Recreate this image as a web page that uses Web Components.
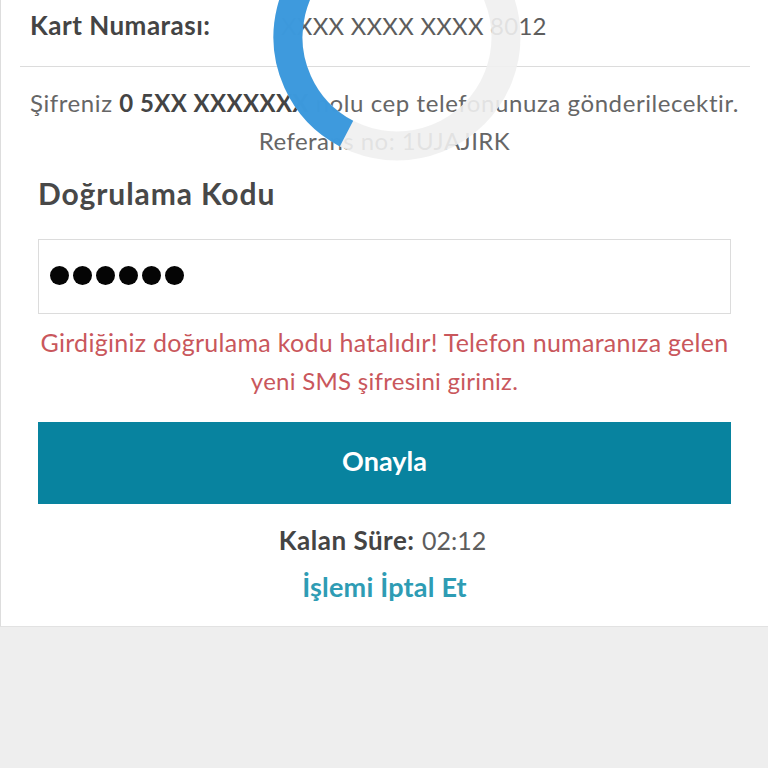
<!DOCTYPE html>
<html lang="tr">
<head>
<meta charset="utf-8">
<title>Doğrulama</title>
<style>
	html, body { margin: 0; height: 100%; background: #eeeeee; overflow: hidden; }
	body { font-family: Lato, "Open Sans", sans-serif; color: #555; }
</style>
</head>
<body>
<template id="secure-panel-tpl">
	<style>
		:host { display: block; position: relative; height: 627px; box-sizing: border-box; background: #fff; border-left: 1px solid #ddd; border-bottom: 1px solid #e2e2e2; }
		.top { margin: 0 18px 0 19px; height: 67px; box-sizing: border-box; border-bottom: 1px solid #dcdcdc; padding: 5px 0 21px 10px; display: grid; grid-template-columns: 251px 1fr; align-items: center; font-size: 24px; }
		.top b { font-size: 26px; letter-spacing: .5px; font-weight: 700; color: #444; white-space: nowrap; }
		.top span { color: #5d5d5d; letter-spacing: .25px; }
		.info { text-align: center; font-size: 24px; letter-spacing: .58px; line-height: 38px; padding-top: 17px; color: #666; white-space: nowrap; }
		.info b { color: #444; font-weight: 700; letter-spacing: .4px; }
		.info span { letter-spacing: .45px; }
		.form { padding: 0 37px 0 37px; }
		h2 { margin: 16px 0 29px; font-size: 30px; letter-spacing: .9px; line-height: 34px; font-weight: 700; color: #484848; }
		.error { text-align: center; color: #c9575c; font-size: 25px; letter-spacing: .28px; line-height: 38px; margin: 9px 0 22px; white-space: nowrap; }
		.error span { font-size: 24px; }
		.timer { text-align: center; margin-top: 18px; padding-right: 4px; font-size: 25px; line-height: 36px; color: #5d5d5d; }
		.timer b { font-size: 26px; letter-spacing: .5px; margin-right: 1px; color: #444; }
		.cancel { display: block; text-align: center; margin-top: 11px; font-size: 27px; letter-spacing: .2px; line-height: 36px; font-weight: 700; color: #2e9cb4; text-decoration: none; }
	</style>
	<div class="top"><b>Kart Numarası:</b><span>XXXX XXXX XXXX 8012</span></div>
	<div class="info">Şifreniz <b>0 5XX XXXXXXX</b> nolu cep telefonunuza gönderilecektir.<br><span>Referans no: 1UJAJIRK</span></div>
	<div class="form">
		<h2>Doğrulama Kodu</h2>
		<code-input></code-input>
		<div class="error">Girdiğiniz doğrulama kodu hatalıdır! Telefon numaranıza gelen<br><span>yeni SMS şifresini giriniz.</span></div>
		<teal-button>Onayla</teal-button>
		<div class="timer"><b>Kalan Süre:</b> 02:12</div>
		<a class="cancel" href="#">İşlemi İptal Et</a>
	</div>
	<ring-spinner></ring-spinner>
</template>
<template id="code-input-tpl">
	<style>
		:host { display: flex; align-items: center; gap: 4px; height: 75px; box-sizing: border-box; border: 1.5px solid #dcdcdc; padding: 0 0 2px 10.5px; background: #fff; }
		i { width: 19px; height: 19px; border-radius: 50%; background: #050505; }
	</style>
	<i></i><i></i><i></i><i></i><i></i><i></i>
</template>
<template id="teal-button-tpl">
	<style>
		:host { display: flex; align-items: center; justify-content: center; height: 82px; padding-bottom: 6px; box-sizing: border-box; background: #08839f; color: #fff; font-size: 27px; font-weight: 700; }
	</style>
	<slot></slot>
</template>
<template id="ring-spinner-tpl">
	<style>
		:host { display: block; position: absolute; left: 272px; top: -87px; width: 248px; height: 248px; }
		svg { display: block; }
	</style>
	<svg width="248" height="248" viewBox="0 0 248 248" fill="none">
		<circle cx="124" cy="124" r="109" stroke="#f0f0f0" stroke-width="29" opacity=".9"/>
		<path d="M124 15A109 109 0 0 0 73.5 220.6" stroke="#2a90da" stroke-width="29" opacity=".9"/>
	</svg>
</template>
<secure-panel></secure-panel>
<script>
	function define(tag) {
		const tpl = document.getElementById(tag + '-tpl');
		customElements.define(tag, class extends HTMLElement {
			constructor() {
				super();
				this.attachShadow({mode: 'open'}).appendChild(tpl.content.cloneNode(true));
			}
		});
	}
	['code-input', 'teal-button', 'ring-spinner', 'secure-panel'].forEach(define);
</script>
</body>
</html>
